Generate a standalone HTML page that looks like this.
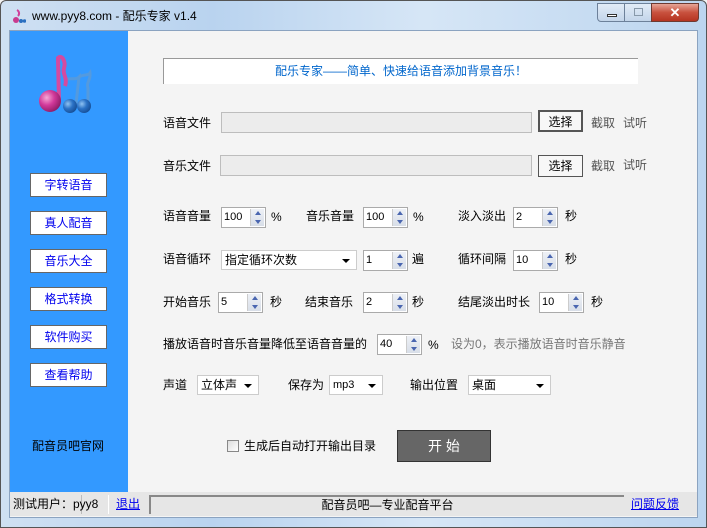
<!DOCTYPE html>
<html><head><meta charset="utf-8"><style>
*{margin:0;padding:0;box-sizing:border-box}
body{width:707px;height:528px;overflow:hidden;position:relative;background:#f4f4f4;font-family:"Liberation Sans","Noto Sans CJK SC",sans-serif;font-size:12px;color:#000}
.a{position:absolute;white-space:nowrap;line-height:14px}
.frame{position:absolute;left:0;top:0;width:707px;height:528px;background:linear-gradient(90deg,#cfe0f2,#b9d3ef 30%,#d6e6f6 60%,#bcd5ef);border:1px solid #555;border-radius:6px 6px 0 0}
.client{position:absolute;left:9px;top:30px;width:689px;height:488px;background:#f4f4f4;border:1px solid #8ba3c0}
.blue{position:absolute;left:10px;top:31px;width:118px;height:461px;background:#3399ff}
.lb{position:absolute;left:30px;width:77px;height:24px;background:#fff;border:1px solid #666;color:#0000ee;text-align:center;line-height:22px;font-size:12px}
.tb{position:absolute;height:21px;background:#ececec;border:1px solid #bdbdbd}
.btn{position:absolute;width:45px;height:22px;background:#f7f7f7;border:1px solid #555;text-align:center;line-height:20px}
.sp{position:absolute;width:45px;height:21px;background:#fff;border:1px solid #aaa;font-size:11px;padding-left:2px;line-height:18px}
.sp i{position:absolute;right:1px;top:1px;width:14px;height:17px;background:linear-gradient(#eef1f6,#d8dee8);border-left:1px solid #ccc}
.sp i:before{content:"";position:absolute;left:4px;top:2px;border:3px solid transparent;border-bottom:4px solid #4a66b0;border-top:0}
.sp i:after{content:"";position:absolute;left:4px;top:11px;border:3px solid transparent;border-top:4px solid #4a66b0;border-bottom:0}
.cb{position:absolute;height:20px;background:#fff;border:1px solid #ccc;padding-left:3px;line-height:18px}
.cb:after{content:"";position:absolute;right:6px;top:8px;border:4px solid transparent;border-top:4px solid #000;border-bottom:0}
</style></head><body>
<div class="frame"></div>
<svg class="a" style="left:12px;top:8px" width="14" height="16" viewBox="0 0 14 16"><path d="M5 2 C7 3 8 6 6 8" stroke="#d0409a" stroke-width="2" fill="none"/><circle cx="4" cy="12" r="3" fill="#c83b8f"/><circle cx="9" cy="13" r="2" fill="#2a6fc0"/><circle cx="12.5" cy="13" r="1.8" fill="#2a6fc0"/></svg>
<div class="a" style="left:32px;top:9px;font-size:12px">www.pyy8.com - 配乐专家 v1.4</div>
<div class="a" style="left:597px;top:3px;width:28px;height:19px;border:1px solid #6d819a;border-radius:0 0 0 4px;background:linear-gradient(#e2ecf7,#c3d5ea)"><div style="position:absolute;left:9px;top:10px;width:10px;height:3px;border:1px solid #333;background:#fff"></div></div>
<div class="a" style="left:624px;top:3px;width:28px;height:19px;border:1px solid #6d819a;background:linear-gradient(#e2ecf7,#c3d5ea)"><div style="position:absolute;left:9px;top:4px;width:9px;height:8px;border:1px solid #8899aa"></div></div>
<div class="a" style="left:651px;top:3px;width:48px;height:19px;border:1px solid #6d3a32;border-radius:0 0 4px 0;background:linear-gradient(#e6a597,#c8513e 50%,#b53421);color:#fff;font-weight:bold;text-align:center;line-height:17px;font-size:13px">✕</div>
<div class="client"></div>
<div class="blue"></div>
<svg class="a" style="left:34px;top:52px" width="64" height="64" viewBox="0 0 64 64">
<defs><radialGradient id="p" cx=".35" cy=".35" r=".7"><stop offset="0" stop-color="#f6a8d6"/><stop offset=".5" stop-color="#d2399a"/><stop offset="1" stop-color="#8e1c66"/></radialGradient>
<radialGradient id="b" cx=".35" cy=".35" r=".7"><stop offset="0" stop-color="#8fc2f2"/><stop offset=".5" stop-color="#2b72c6"/><stop offset="1" stop-color="#164e96"/></radialGradient></defs>
<path d="M45 25 C50 22 54 24 56 21 C57 28 52 30 54 36 L54 52" stroke="#5b9ad8" stroke-width="3" fill="none" opacity=".85"/>
<path d="M33 27 C38 26 42 28 45 25 L42 52" stroke="#5b9ad8" stroke-width="3" fill="none" opacity=".85"/>
<circle cx="36" cy="54" r="7" fill="url(#b)"/><circle cx="50" cy="54" r="7" fill="url(#b)"/>
<path d="M25 50 L24 6 C28 2 32 10 30 16 C28 22 34 26 31 34" stroke="#d44aa0" stroke-width="4" fill="none"/>
<circle cx="16" cy="49" r="11" fill="url(#p)"/>
</svg>
<div class="lb" style="top:173px">字转语音</div>
<div class="lb" style="top:211px">真人配音</div>
<div class="lb" style="top:249px">音乐大全</div>
<div class="lb" style="top:287px">格式转换</div>
<div class="lb" style="top:325px">软件购买</div>
<div class="lb" style="top:363px">查看帮助</div>
<div class="a" style="left:32px;top:439px">配音员吧官网</div>

<div class="a" style="left:163px;top:58px;width:475px;height:26px;background:#fff;border-top:1px solid #999;border-left:1px solid #999;color:#0066cc;text-align:center;line-height:25px">配乐专家——简单、快速给语音添加背景音乐！</div>

<div class="a" style="left:163px;top:116px">语音文件</div>
<div class="tb" style="left:221px;top:112px;width:311px"></div>
<div class="btn" style="left:538px;top:110px;border:2px solid #555">选择</div>
<div class="a" style="left:591px;top:116px;color:#555">截取</div><div class="a" style="left:623px;top:116px;color:#555">试听</div>

<div class="a" style="left:163px;top:159px">音乐文件</div>
<div class="tb" style="left:220px;top:155px;width:312px"></div>
<div class="btn" style="left:538px;top:155px">选择</div>
<div class="a" style="left:591px;top:159px;color:#555">截取</div><div class="a" style="left:623px;top:158px;color:#555">试听</div>

<div class="a" style="left:163px;top:209px">语音音量</div><div class="sp" style="left:221px;top:207px">100<i></i></div><div class="a" style="left:271px;top:210px">%</div>
<div class="a" style="left:306px;top:209px">音乐音量</div><div class="sp" style="left:363px;top:207px">100<i></i></div><div class="a" style="left:413px;top:210px">%</div>
<div class="a" style="left:458px;top:209px">淡入淡出</div><div class="sp" style="left:513px;top:207px">2<i></i></div><div class="a" style="left:565px;top:209px">秒</div>

<div class="a" style="left:163px;top:252px">语音循环</div><div class="cb" style="left:221px;top:250px;width:136px;font-size:12px">指定循环次数</div>
<div class="sp" style="left:363px;top:250px">1<i></i></div><div class="a" style="left:412px;top:252px">遍</div>
<div class="a" style="left:458px;top:252px">循环间隔</div><div class="sp" style="left:513px;top:250px">10<i></i></div><div class="a" style="left:565px;top:252px">秒</div>

<div class="a" style="left:163px;top:295px">开始音乐</div><div class="sp" style="left:218px;top:292px">5<i></i></div><div class="a" style="left:270px;top:295px">秒</div>
<div class="a" style="left:305px;top:295px">结束音乐</div><div class="sp" style="left:363px;top:292px">2<i></i></div><div class="a" style="left:412px;top:295px">秒</div>
<div class="a" style="left:458px;top:295px">结尾淡出时长</div><div class="sp" style="left:539px;top:292px">10<i></i></div><div class="a" style="left:591px;top:295px">秒</div>

<div class="a" style="left:163px;top:337px">播放语音时音乐音量降低至语音音量的</div><div class="sp" style="left:377px;top:334px">40<i></i></div><div class="a" style="left:428px;top:338px">%</div>
<div class="a" style="left:451px;top:337px;color:#777">设为0，表示播放语音时音乐静音</div>

<div class="a" style="left:163px;top:378px">声道</div><div class="cb" style="left:197px;top:375px;width:62px">立体声</div>
<div class="a" style="left:288px;top:378px">保存为</div><div class="cb" style="left:329px;top:375px;width:54px;font-size:11px">mp3</div>
<div class="a" style="left:410px;top:378px">输出位置</div><div class="cb" style="left:468px;top:375px;width:83px">桌面</div>

<div class="a" style="left:227px;top:440px;width:12px;height:12px;border:1px solid #888;background:linear-gradient(135deg,#ddd,#fff)"></div>
<div class="a" style="left:244px;top:439px">生成后自动打开输出目录</div>
<div class="a" style="left:397px;top:430px;width:94px;height:32px;background:#666;border:1px solid #333;color:#fff;text-align:center;line-height:30px;font-size:14px">开 始</div>

<div class="a" style="left:10px;top:492px;width:687px;height:24px;background:#e6e6e6"></div>
<div class="a" style="left:10px;top:495px;width:72px;height:19px;border-right:1px solid #bbb;line-height:19px;padding-left:3px">测试用户：pyy8</div>
<div class="a" style="left:116px;top:497px;color:#0000ee;text-decoration:underline">退出</div>
<div class="a" style="left:108px;top:495px;height:19px;border-left:1px solid #fff"></div>
<div class="a" style="left:149px;top:495px;width:475px;height:19px;border-top:2px solid #888;border-left:2px solid #888;background:#e6e6e6;text-align:center;line-height:17px">配音员吧—专业配音平台</div>
<div class="a" style="left:631px;top:497px;color:#0000ee;text-decoration:underline">问题反馈</div>
</body></html>
